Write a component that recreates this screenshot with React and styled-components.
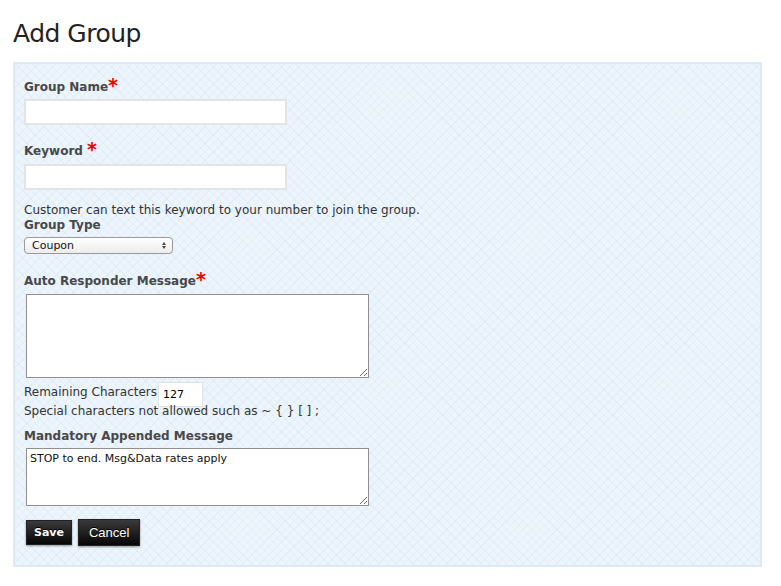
import styled, { createGlobalStyle } from 'styled-components';

const GlobalStyle = createGlobalStyle`
  body {
    margin: 0;
    background: #fff;
    font-family: "DejaVu Sans", Verdana, sans-serif;
    color: #333;
  }
`;

const Page = styled.div`
  width: 781px;
  padding: 19px 19px 0 13px;
  box-sizing: border-box;
`;

const Title = styled.h1`
  margin: 0 0 14px 0;
  font-size: 25px;
  letter-spacing: -0.5px;
  font-weight: normal;
  color: #222;
  line-height: 29px;
`;

const Panel = styled.form`
  border: 2px solid #dde9f5;
  background-color: #ecf4fc;
  background-image:
    repeating-linear-gradient(45deg, rgba(200, 218, 238, 0.24) 0 1px, transparent 1px 6px),
    repeating-linear-gradient(-45deg, rgba(200, 218, 238, 0.24) 0 1px, transparent 1px 6px);
  padding: 16px 11px 19px 9px;
  display: flex;
  flex-direction: column;
  align-items: flex-start;
  box-sizing: border-box;

  & > * { flex-shrink: 0; }
`;

const Label = styled.label`
  font-size: 12px;
  font-weight: bold;
  color: #484848;
  line-height: 15px;
  height: 15px;
  margin-top: ${p => p.$top || 0}px;
`;

const Star = styled.span`
  color: #e00;
  font-size: 19px;
  font-weight: bold;
  vertical-align: -1px;
  line-height: 10px;
  margin-left: ${p => (p.$gap ? 4 : 0)}px;
`;

const TextInput = styled.input`
  width: 263px;
  height: 26px;
  box-sizing: border-box;
  border: 2px solid #e4e4e4;
  background: #fff;
  margin-top: ${p => p.$top || 0}px;
`;

const Help = styled.div`
  font-size: 12px;
  line-height: 15px;
  height: 15px;
  color: #333;
  margin-top: ${p => p.$top || 0}px;
`;

const Select = styled.div`
  width: 149px;
  height: 17px;
  box-sizing: border-box;
  margin-top: ${p => p.$top || 0}px;
  border: 1px solid #9a9a9a;
  border-radius: 4px;
  background: linear-gradient(#ffffff, #ececec);
  display: flex;
  align-items: center;
  justify-content: space-between;
  padding: 0 6px 0 7px;
  font-size: 11px;
  color: #111;
`;

const Arrows = styled.span`
  display: flex;
  flex-direction: column;
  align-items: center;
  gap: 1px;
  &::before, &::after {
    content: '';
    border-left: 2px solid transparent;
    border-right: 2px solid transparent;
  }
  &::before { border-bottom: 3px solid #444; }
  &::after { border-top: 3px solid #444; }
`;

const TextArea = styled.textarea`
  width: 343px;
  height: ${p => p.$h}px;
  box-sizing: border-box;
  margin: ${p => p.$top || 0}px 0 0 2px;
  border: 1px solid #8f8f8f;
  background: #fff;
  font-family: "DejaVu Sans", Verdana, sans-serif;
  font-size: 11px;
  color: #111;
  padding: 3px 3px;
  resize: both;
`;

const CountRow = styled.div`
  display: flex;
  align-items: flex-start;
  height: 22px;
  margin-top: 4px;
  font-size: 12px;
  line-height: 15px;
  color: #333;

  & > span { padding: 3px 1px 0 0; }
`;

const CountBox = styled.div`
  width: 45px;
  height: 25px;
  box-sizing: border-box;
  border: 1px solid #e2e2e2;
  background: #fff;
  font-size: 11px;
  color: #000;
  display: flex;
  align-items: center;
  padding-left: 4px;
`;

const Buttons = styled.div`
  display: flex;
  align-items: center;
  gap: 6px;
  margin: 13px 0 0 2px;
`;

const Button = styled.button`
  height: ${p => (p.$big ? 27 : 25)}px;
  padding: 0 ${p => (p.$big ? 10 : 7)}px;
  background: linear-gradient(#3a3a3a, #060606);
  border: 1px solid #222;
  box-shadow: 0 1px 2px rgba(0, 0, 0, 0.4);
  color: #fff;
  font-family: ${p => (p.$big ? '"Liberation Sans", Arial, sans-serif' : '"DejaVu Sans", Verdana, sans-serif')};
  font-size: ${p => (p.$big ? 13 : 11)}px;
  font-weight: ${p => (p.$big ? 'normal' : 'bold')};
  text-shadow: 0 -1px 0 #000;
  cursor: pointer;
`;

export default function App() {
  return (
    <>
      <GlobalStyle />
      <Page>
        <Title>Add Group</Title>
        <Panel onSubmit={e => e.preventDefault()}>
          <Label>Group Name<Star>*</Star></Label>
          <TextInput $top={4} />
          <Label $top={19}>Keyword<Star $gap>*</Star></Label>
          <TextInput $top={5} />
          <Help $top={13}>Customer can text this keyword to your number to join the group.</Help>
          <Label>Group Type</Label>
          <Select $top={4}>
            <span>Coupon</span>
            <Arrows />
          </Select>
          <Label $top={20}>Auto Responder Message<Star>*</Star></Label>
          <TextArea $h={84} $top={5} />
          <CountRow>
            <span>Remaining Characters</span>
            <CountBox>127</CountBox>
          </CountRow>
          <Help>Special characters not allowed such as ~ {'{'} {'}'} [ ] ;</Help>
          <Label $top={10}>Mandatory Appended Message</Label>
          <TextArea $h={58} $top={4} defaultValue="STOP to end. Msg&Data rates apply" />
          <Buttons>
            <Button type="button">Save</Button>
            <Button type="button" $big>Cancel</Button>
          </Buttons>
        </Panel>
      </Page>
    </>
  );
}
